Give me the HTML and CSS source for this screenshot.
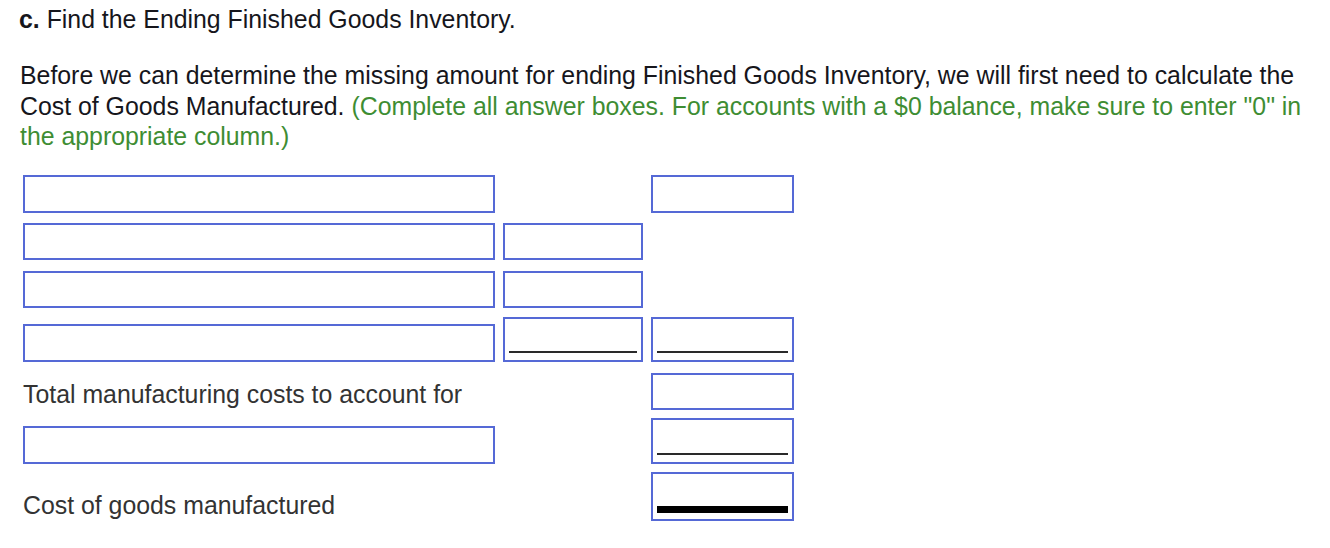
FILE: index.html
```
<!DOCTYPE html>
<html>
<head>
<meta charset="utf-8">
<link rel="stylesheet" href="styles.css">
</head>
<body>
<div class="page">
  <p class="heading"><b>c.</b> Find the Ending Finished Goods Inventory.</p>
  <p class="intro">Before we can determine the missing amount for ending Finished Goods Inventory, we will first need to calculate the<br>Cost of Goods Manufactured. <span class="hint">(Complete all answer boxes. For accounts with a $0 balance, make sure to enter "0" in<br>the appropriate column.)</span></p>
  <div class="sheet">
    <div class="box c1"></div>
    <div class="box c3 big"></div>

    <div class="box c1 short"></div>
    <div class="box c2"></div>

    <div class="box c1 short"></div>
    <div class="box c2"></div>

    <div class="box c1"></div>
    <div class="box c2 ul"></div>
    <div class="box c3 ul"></div>

    <div class="label c1">Total manufacturing costs to account for</div>
    <div class="box c3"></div>

    <div class="box c1"></div>
    <div class="box c3 ul tall"></div>

    <div class="label c1">Cost of goods manufactured</div>
    <div class="box c3 dbl"></div>
  </div>
</div>
</body>
</html>
```
FILE: styles.css
```
html, body {
  margin: 0;
  background: #fff;
}
.page {
  padding: 5px 19px 0 19px;
  font-family: "Liberation Sans", Arial, sans-serif;
  font-size: 24.85px;
  line-height: 30.5px;
  color: #16161c;
}
.heading {
  margin: 0;
  white-space: nowrap;
}
.intro {
  margin: 25.5px 0 0 1px;
  white-space: nowrap;
}
.hint {
  color: #3e8d33;
}
.sheet {
  margin: 22px 0 0 4px;
  display: grid;
  grid-template-columns: 472px 140px 143px;
  grid-template-rows: 38px 47px 48px 54px 48px 54px 57px;
  column-gap: 8px;
  align-items: end;
}
.c1 { grid-column: 1; }
.c2 { grid-column: 2; }
.c3 { grid-column: 3; }
.box {
  box-sizing: border-box;
  height: 37px;
  border: 2px solid #5569d6;
  background: #fff;
  position: relative;
}
.c1, .big { height: 38px; }
.c1.short { height: 37px; }
.ul { height: 45px; }
.ul.tall { height: 46px; }
.dbl { height: 49px; }
.ul::after,
.dbl::after {
  content: "";
  position: absolute;
  left: 4px;
  right: 4px;
  background: #2a2a2a;
}
.ul::after {
  bottom: 7px;
  height: 2px;
}
.dbl::after {
  bottom: 5.5px;
  height: 7.5px;
  background: #000;
}
.label {
  height: auto;
  color: #333;
  white-space: nowrap;
  align-self: end;
  margin-bottom: -1px;
}
```
